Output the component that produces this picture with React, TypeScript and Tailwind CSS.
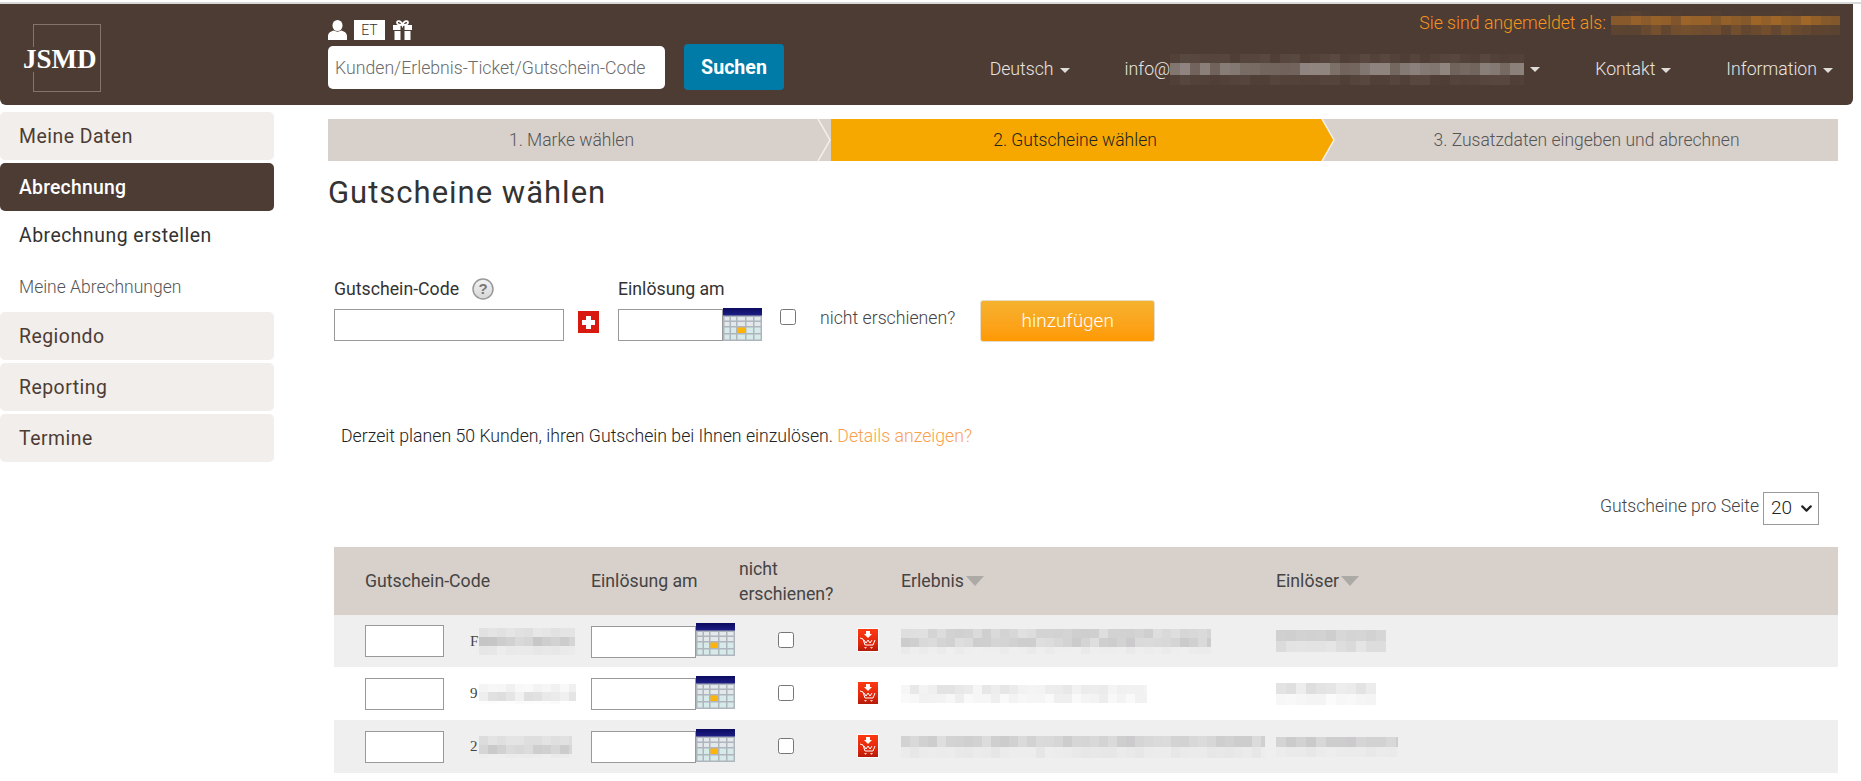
import React from "react";
import { ChevronDown } from "lucide-react";

type Tint = [number, number, number];

function hash(a: number, b: number, s: number) {
  const x = Math.sin(a * 12.9898 + b * 78.233 + s * 37.719) * 43758.5453;
  return x - Math.floor(x);
}

function Mosaic({ w, rows, seed, tint, cell = 9 }: { w: number; rows: [number, number, number][]; seed: number; tint: Tint; cell?: number }) {
  const n = Math.ceil(w / cell);
  return (
    <div className="flex flex-col shrink-0 overflow-hidden" style={{ width: w }}>
      {rows.map(([h, lo, hi], r) => (
        <div key={r} className="flex" style={{ height: h }}>
          {Array.from({ length: n }).map((_, c) => (
            <div
              key={c}
              className="shrink-0"
              style={{ width: cell, backgroundColor: `rgba(${tint[0]},${tint[1]},${tint[2]},${lo + (hi - lo) * hash(c, r, seed)})` }}
            />
          ))}
        </div>
      ))}
    </div>
  );
}

function Calendar() {
  const xs: [number, number][] = [[1.5, 5], [8, 5], [14.5, 7.5], [23.5, 6.5], [31.5, 6]];
  const ys: [number, number][] = [[9, 3.5], [14, 4], [19.5, 5.5], [26.5, 5]];
  return (
    <svg width="39" height="33" viewBox="0 0 39 33" className="shrink-0 block">
      <defs>
        <linearGradient id="calTop" x1="0" y1="0" x2="0" y2="1">
          <stop offset="0" stopColor="#0b0b60" />
          <stop offset="1" stopColor="#1e1e86" />
        </linearGradient>
      </defs>
      <rect width="39" height="33" fill="#aeb5bc" />
      <rect width="39" height="7.5" fill="url(#calTop)" />
      {ys.map(([y, h], r) =>
        xs.map(([x, w], c) => (
          <rect key={`${r}-${c}`} x={x} y={y} width={w} height={h} fill={r === 2 && c === 2 ? "#fdb40c" : r >= 2 ? "#d6eaea" : "#e3e8eb"} />
        ))
      )}
    </svg>
  );
}

function Cart() {
  return (
    <svg width="22" height="24" viewBox="0 0 22 24" className="shrink-0 block">
      <defs>
        <linearGradient id="cartBg" x1="0" y1="0" x2="0" y2="1">
          <stop offset="0" stopColor="#ff3a12" />
          <stop offset="0.65" stopColor="#e0260c" />
          <stop offset="1" stopColor="#b01a0a" />
        </linearGradient>
      </defs>
      <rect x="0.5" y="0.5" width="21" height="23" fill="url(#cartBg)" stroke="#fff" />
      <path d="M9 3h4v3h2l-4 4-4-4h2z" fill="#fff" />
      <path d="M3 10l3 1 2 6h8l2-5" fill="none" stroke="#fff" strokeWidth="1" />
      <path d="M7 12l2 3 2-3 2 3 2-3" fill="none" stroke="#fff" strokeWidth="1" />
      <path d="M7 19l1.5 2 1.5-2zM13 19l1.5 2 1.5-2z" fill="#f4c4b8" />
    </svg>
  );
}

function Caret() {
  return <span className="inline-block ml-[6px] align-middle w-0 h-0 border-x-[5px] border-x-transparent border-t-[5px] border-t-[#e0dcd9]" />;
}

function SortTri() {
  return <span className="inline-block w-0 h-0 ml-[2px] border-x-[9px] border-x-transparent border-t-[10px] border-t-[#adaaa6]" />;
}

function Chevron() {
  return (
    <svg width="14" height="42" viewBox="0 0 14 42" className="absolute right-0 top-0 block">
      <path d="M1 0L13 21 1 42" fill="none" stroke="#f4f1ee" strokeWidth="1.500" />
    </svg>
  );
}

function ChevronYellow() {
  return (
    <svg width="14" height="42" viewBox="0 0 14 42" className="absolute right-0 top-0 block">
      <rect width="14" height="42" fill="#d8d0cb" />
      <path d="M0 0h1L13 21 1 42H0z" fill="#f7a800" />
      <path d="M1 0L13 21 1 42" fill="none" stroke="#f4f1ee" strokeWidth="1.500" />
    </svg>
  );
}

const sideItem = "h-12 flex items-center pl-[19px] pt-[2px] rounded-[5px] bg-[#f1eeeb] text-[#4d3c33] text-[19.4px] tracking-[0.5px] mb-[3px]";

type Row = {
  bg: string;
  ch: string;
  code: [number, [number, number, number][]];
  exp: [number, [number, number, number][]];
  who: [number, [number, number, number][]];
};

const rows: Row[] = [
  {
    bg: "bg-[#efefef]",
    ch: "F",
    code: [96, [[9, 0.03, 0.09], [9, 0.12, 0.28], [9, 0.01, 0.05]]],
    exp: [310, [[9, 0.09, 0.2], [9, 0.09, 0.22], [7, 0.0, 0.03]]],
    who: [110, [[11, 0.14, 0.22], [11, 0.05, 0.13]]],
  },
  {
    bg: "bg-white",
    ch: "9",
    code: [97, [[8, 0.03, 0.09], [9, 0.07, 0.18], [3, 0, 0.03]]],
    exp: [246, [[9, 0.05, 0.16], [9, 0.03, 0.1]]],
    who: [100, [[11, 0.09, 0.2], [11, 0.02, 0.06]]],
  },
  {
    bg: "bg-[#efefef]",
    ch: "2",
    code: [93, [[9, 0.06, 0.11], [9, 0.1, 0.22], [4, 0.0, 0.03]]],
    exp: [364, [[11, 0.1, 0.22], [11, 0.01, 0.05]]],
    who: [122, [[10, 0.12, 0.24], [10, 0.01, 0.05]]],
  },
];

export default function App() {
  return (
    <div className="w-[1861px] h-[781px] overflow-hidden bg-white font-['Roboto',sans-serif] text-[#333]">
      <div className="h-[2px] bg-white" />
      <div className="h-[2px] bg-[#d9d9d9]" />
      <header className="w-[1853px] h-[101px] bg-[#4d3c33] rounded-b-[6px] flex">
        <div className="w-[328px] shrink-0 pl-[23px] pt-5">
          <div className="relative w-[78px] h-[68px]">
            <div className="absolute left-[10px] top-0 w-[68px] h-[68px] border border-[#83756b]" />
            <div className="absolute left-0 top-[23px] h-[25px] bg-[#4d3c33] text-white font-['Liberation_Serif',serif] font-bold text-[27px] leading-[25px] whitespace-nowrap">JSMD</div>
          </div>
        </div>
        <div className="w-[456px] shrink-0 pt-4">
          <div className="flex items-center h-5 mb-[6px]">
            <svg width="19" height="20" viewBox="0 0 19 20" className="shrink-0">
              <ellipse cx="9.5" cy="5.5" rx="5" ry="5.5" fill="#fff" />
              <path d="M0 20v-4c0-3 3-5 6-5.5 2 1.500 5 1.500 7 0 3 .5 6 2.500 6 5.500v4z" fill="#fff" />
            </svg>
            <div className="ml-[7px] w-[31px] h-5 bg-white text-[#333] text-[14px] font-light flex items-center justify-center">ET</div>
            <svg width="21" height="20" viewBox="0 0 21 20" className="ml-[7px] shrink-0">
              <path d="M1 5h19v5H1zM2.500 11h16v9h-16z" fill="#fff" />
              <rect x="8.500" y="5" width="4" height="15" fill="#4d3c33" />
              <path d="M10.500 5C8 5 5 4.500 5 2.500S9 0 10.500 5c1.500-5 5.500-4.500 5.500-2.500S13 5 10.500 5z" fill="none" stroke="#fff" strokeWidth="1.800" />
            </svg>
          </div>
          <div className="flex items-start">
            <input
              readOnly
              placeholder="Kunden/Erlebnis-Ticket/Gutschein-Code"
              className="w-[337px] h-[43px] bg-white rounded-[5px] px-[7px] text-[17.7px] font-light text-[#555] placeholder:text-[#6b6b6b] outline-none"
            />
            <button className="ml-[19px] -mt-[2px] w-[100px] h-[46px] bg-[#007ba7] rounded-[4px] text-white font-bold text-[19.6px] pt-[2px]">Suchen</button>
          </div>
        </div>
        <div className="flex-1 flex flex-col">
          <div className="h-[38px] flex items-center justify-end pr-[13px] text-[#f7931e] font-light text-[17.7px]">
            <span className="mr-[5px]">Sie sind angemeldet als:</span>
            <Mosaic w={229} seed={3} tint={[247, 147, 30]} rows={[[5, 0.0, 0.05], [9, 0.3, 0.5], [10, 0.08, 0.25]]} cell={10} />
          </div>
          <nav className="flex items-center justify-end gap-[55px] pr-5 mt-[11px] text-[#e8e4e1] font-light text-[17.7px] h-[32px]">
            <span className="whitespace-nowrap">Deutsch<Caret /></span>
            <span className="flex items-center whitespace-nowrap">
              info@
              <Mosaic w={354} seed={7} tint={[255, 255, 255]} rows={[[9, 0.01, 0.07], [12, 0.18, 0.38], [10, 0.01, 0.06]]} cell={10} />
              <Caret />
            </span>
            <span className="whitespace-nowrap">Kontakt<Caret /></span>
            <span className="whitespace-nowrap">Information<Caret /></span>
          </nav>
        </div>
      </header>

      <div className="flex">
        <aside className="w-[274px] shrink-0 mt-[7px]">
          <div className={sideItem}>Meine Daten</div>
          <div className="h-12 flex items-center pl-[19px] pt-[2px] rounded-[5px] bg-[#4d3c33] text-white font-medium text-[19.4px] tracking-[0.2px]">Abrechnung</div>
          <div className="h-12 flex items-center pl-[19px] pt-[2px] text-[#333] text-[19.4px] tracking-[0.5px]">Abrechnung erstellen</div>
          <div className="h-[53px] flex items-center pl-[19px] pt-[3px] text-[#555] font-light text-[17.5px]">Meine Abrechnungen</div>
          <div className={sideItem}>Regiondo</div>
          <div className={sideItem}>Reporting</div>
          <div className={sideItem}>Termine</div>
        </aside>

        <main className="ml-[54px] w-[1510px] mt-[14px]">
          <div className="flex h-[42px] text-[17.5px] font-light">
            <div className="relative w-[503px] bg-[#d8d0cb] text-[#555] flex items-center justify-center pr-4">
              1. Marke wählen
              <Chevron />
            </div>
            <div className="relative w-[504px] bg-[#f7a800] text-[#222] flex items-center justify-center pr-4">
              2. Gutscheine wählen
              <ChevronYellow />
            </div>
            <div className="flex-1 bg-[#d8d0cb] text-[#555] flex items-center justify-center">3. Zusatzdaten eingeben und abrechnen</div>
          </div>

          <h1 className="mt-3 h-10 flex items-center text-[31px] font-normal text-[#333] tracking-[1px]">Gutscheine wählen</h1>

          <div className="mt-[64px] ml-[6px] flex items-start h-[65px]">
            <div className="w-[284px] shrink-0">
              <div className="h-8 flex items-center pb-2 text-[17.7px]">
                Gutschein-Code
                <svg width="22" height="22" viewBox="0 0 22 22" className="ml-[13px]">
                  <defs>
                    <linearGradient id="helpBg" x1="0" y1="0" x2="0" y2="1">
                      <stop offset="0" stopColor="#f4f4f4" />
                      <stop offset="1" stopColor="#d6d6d6" />
                    </linearGradient>
                  </defs>
                  <circle cx="11" cy="11" r="10" fill="url(#helpBg)" stroke="#999" strokeWidth="1.500" />
                  <text x="11" y="16" textAnchor="middle" fontSize="15" fontWeight="700" fill="#777" fontFamily="Liberation Sans, sans-serif">?</text>
                </svg>
              </div>
              <div className="flex items-center">
                <input readOnly className="w-[230px] h-8 bg-white border border-[#999] outline-none" />
                <svg width="21" height="22" viewBox="0 0 21 22" className="ml-[14px] -mt-[6px]">
                  <rect width="21" height="22" fill="#d8190f" />
                  <path d="M8 5h5v4h4v5h-4v4H8v-4H4V9h4z" fill="#fff" />
                </svg>
              </div>
            </div>
            <div className="w-[162px] shrink-0">
              <div className="h-8 flex items-center pb-2 text-[17.7px]">Einlösung am</div>
              <div className="flex items-start -mt-px">
                <input readOnly className="w-[105px] h-8 bg-white border border-[#999] outline-none mt-px" />
                <Calendar />
              </div>
            </div>
            <input type="checkbox" readOnly className="w-4 h-4 mt-8 m-0 shrink-0" />
            <span className="ml-6 mt-[28px] text-[17.7px] font-light text-[#444] whitespace-nowrap">nicht erschienen?</span>
            <button className="ml-[25px] mt-[23px] w-[175px] h-[42px] rounded-[3px] border border-[#e6dcc8] bg-gradient-to-b from-[#f5b22e] to-[#ff9900] text-white text-[19px] font-light">hinzufügen</button>
          </div>

          <p className="mt-[82px] ml-[13px] h-6 leading-6 text-[17.7px] font-light text-[#222]">
            Derzeit planen 50 Kunden, ihren Gutschein bei Ihnen einzulösen. <span className="text-[#f9a04e]">Details anzeigen?</span>
          </p>

          <div className="mt-[44px] flex items-center justify-end pr-[19px] h-[33px]">
            <span className="text-[17.6px] font-light text-[#444] mr-1 pb-[5px]">Gutscheine pro Seite</span>
            <div className="relative w-14 h-[33px]">
              <select className="appearance-none w-14 h-[33px] bg-white border border-[#999] text-[19px] font-light text-[#222] pl-[7px]" defaultValue="20">
                <option>20</option>
              </select>
              <ChevronDown size={17} strokeWidth={3} className="absolute right-[4px] top-[8px] text-[#222] pointer-events-none" />
            </div>
          </div>

          <table className="mt-[22px] ml-[6px] w-[1504px] table-fixed border-collapse text-[17.7px] text-[#444]">
            <colgroup>
              <col className="w-[257px]" />
              <col className="w-[148px]" />
              <col className="w-[118px]" />
              <col className="w-[44px]" />
              <col className="w-[375px]" />
              <col />
            </colgroup>
            <thead>
              <tr className="h-[68px] bg-[#d8d0cb]">
                <th className="pl-[31px] text-left font-normal">Gutschein-Code</th>
                <th className="text-left font-normal">Einlösung am</th>
                <th className="text-left font-normal leading-[25px] pt-[2px]">nicht<br />erschienen?</th>
                <th />
                <th className="text-left font-normal"><span className="flex items-center">Erlebnis<SortTri /></span></th>
                <th className="text-left font-normal"><span className="flex items-center">Einlöser<SortTri /></span></th>
              </tr>
            </thead>
            <tbody>
              {rows.map((r, i) => (
                <tr key={i} className={`${r.bg} ${i === 0 ? "h-[52px]" : "h-[53px]"}`}>
                  <td className="pl-[31px]">
                    <div className="flex items-center">
                      <input readOnly className="w-[79px] h-8 bg-white border border-[#999] outline-none shrink-0" />
                      <span className="ml-[26px] w-[9px] font-['Liberation_Serif',serif] text-[15px] text-[#444]">{r.ch}</span>
                      <Mosaic w={r.code[0]} seed={i + 11} tint={[70, 70, 70]} rows={r.code[1]} cell={9} />
                    </div>
                  </td>
                  <td>
                    <div className="flex items-center">
                      <input readOnly className="w-[105px] h-8 bg-white border border-[#999] outline-none shrink-0 mt-[1px]" />
                      <div className="-mt-[3px]"><Calendar /></div>
                    </div>
                  </td>
                  <td className="pl-[39px]">
                    <input type="checkbox" readOnly className="w-4 h-4 block -mt-[2px]" />
                  </td>
                  <td><div className="-mt-[2px]"><Cart /></div></td>
                  <td><Mosaic w={r.exp[0]} seed={i + 21} tint={[80, 75, 80]} rows={r.exp[1]} cell={9} /></td>
                  <td><Mosaic w={r.who[0]} seed={i + 31} tint={[80, 75, 80]} rows={r.who[1]} cell={10} /></td>
                </tr>
              ))}
            </tbody>
          </table>
        </main>
      </div>
    </div>
  );
}
